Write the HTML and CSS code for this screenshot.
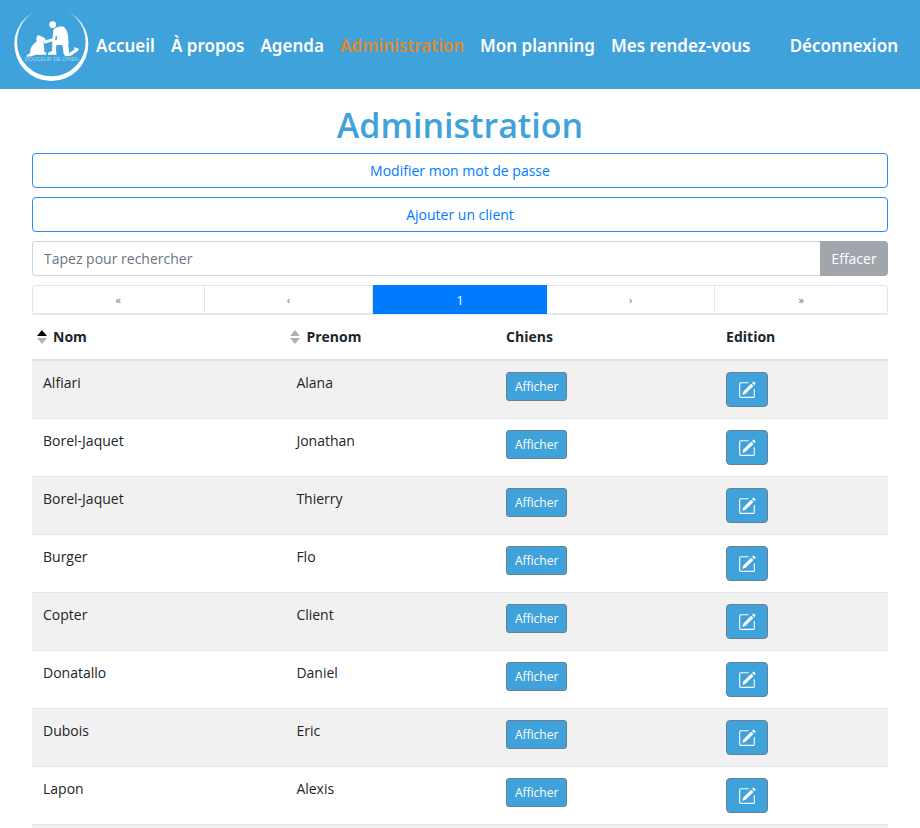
FILE: index.html
```
<!DOCTYPE html>
<html lang="fr">
<head>
<meta charset="utf-8">
<meta name="viewport" content="width=device-width, initial-scale=1">
<title>Administration</title>
<link rel="stylesheet" href="styles.css">
</head>
<body>
<svg class="sprite" aria-hidden="true">
  <symbol id="edit" viewBox="0 0 16 16">
    <path fill="currentColor" d="M15.502 1.94a.5.5 0 0 1 0 .706L14.459 3.69l-2-2L13.502.646a.5.5 0 0 1 .707 0l1.293 1.293zm-1.75 2.456-2-2L4.939 9.21a.5.5 0 0 0-.121.196l-.805 2.414a.25.25 0 0 0 .316.316l2.414-.805a.5.5 0 0 0 .196-.12l6.813-6.814z"/>
    <path fill="currentColor" fill-rule="evenodd" d="M1 13.5A1.5 1.5 0 0 0 2.5 15h11a1.5 1.5 0 0 0 1.5-1.5v-6a.5.5 0 0 0-1 0v6a.5.5 0 0 1-.5.5h-11a.5.5 0 0 1-.5-.5v-11a.5.5 0 0 1 .5-.5H9a.5.5 0 0 0 0-1H2.5A1.5 1.5 0 0 0 1 2.5v11z"/>
  </symbol>
</svg>
<header class="navbar">
  <a class="brand" href="#" aria-label="Douceur de chien">
    <svg class="logo" viewBox="0 0 252 240">
      <defs>
        <linearGradient id="fade" x1="0" y1="0" x2="0" y2="1">
          <stop offset="0.06" stop-color="#fff" stop-opacity="0"/>
          <stop offset="0.2" stop-color="#fff" stop-opacity="0.7"/>
          <stop offset="0.4" stop-color="#fff"/>
        </linearGradient>
      </defs>
      <path fill="url(#fade)" fill-rule="evenodd" d="M124 6a111 111 0 1 0 0 222a111 111 0 1 0 0-222zM124 8a103 103 0 1 1 0 206a103 103 0 1 1 0-206z"/>
      <ellipse class="ink" cx="128" cy="59" rx="10" ry="10"/>
      <path class="ink" d="M130 74Q148 61 161 65Q171 72 174 92L176 118L162 122L140 116Q139 104 142 94L130 92z"/>
      <path class="limb" stroke-width="9" d="M136 76L131 104L104 111"/>
      <path class="limb" stroke-width="15" d="M165 112L136 113"/>
      <path class="limb" stroke-width="12" d="M133 113L132 141"/>
      <path class="ink" d="M126 137h13v12h-25v-5z"/>
      <path class="limb" stroke-width="17" d="M165 112L169 144"/>
      <path class="limb" stroke-width="9" d="M170 149L181 148L198 136"/>
      <path class="ink" d="M191 126l15 5v5l-9 6z"/>
      <path class="ink" d="M79 99L83 91L91 92L98 96L106 101L106 107L98 110L102 120L103 140L110 145L108 149H78C68 152 60 155 51 155L50 151L61 144C59 129 69 116 80 110z"/>
      <text class="logo-text" x="125" y="168" text-anchor="middle">DOUCEUR DE CHIEN</text>
    </svg>
  </a>
  <nav class="links">
    <a href="#">Accueil</a>
    <a href="#">À propos</a>
    <a href="#">Agenda</a>
    <a href="#" class="active" aria-current="page">Administration</a>
    <a href="#">Mon planning</a>
    <a href="#">Mes rendez-vous</a>
  </nav>
  <a class="logout" href="#">Déconnexion</a>
</header>
<main class="content">
  <h1>Administration</h1>
  <button type="button" class="btn-outline">Modifier mon mot de passe</button>
  <button type="button" class="btn-outline">Ajouter un client</button>
  <div class="search">
    <input type="search" aria-label="Rechercher" placeholder="Tapez pour rechercher">
    <button type="button" disabled>Effacer</button>
  </div>
  <div class="pagination" role="group" aria-label="Pagination">
    <button type="button" disabled>«</button>
    <button type="button" disabled>‹</button>
    <button type="button" class="current" aria-current="page">1</button>
    <button type="button" disabled>›</button>
    <button type="button" disabled>»</button>
  </div>
  <table class="clients">
    <colgroup><col class="col-nom"><col class="col-prenom"><col class="col-chiens"><col></colgroup>
    <thead>
      <tr>
        <th class="sortable" aria-sort="ascending"><svg class="sort" viewBox="0 0 10 14"><path class="on" d="M5 0L10 6H0z"/><path class="off" d="M0 8H10L5 14z"/></svg>Nom</th>
        <th class="sortable"><svg class="sort" viewBox="0 0 10 14"><path class="off" d="M5 0L10 6H0z"/><path class="off" d="M0 8H10L5 14z"/></svg>Prenom</th>
        <th>Chiens</th>
        <th>Edition</th>
      </tr>
    </thead>
    <tbody>
      <tr><td>Alfiari</td><td>Alana</td><td><button type="button" class="btn-show">Afficher</button></td><td><button type="button" class="btn-edit" aria-label="Modifier"><svg><use href="#edit"/></svg></button></td></tr>
      <tr><td>Borel-Jaquet</td><td>Jonathan</td><td><button type="button" class="btn-show">Afficher</button></td><td><button type="button" class="btn-edit" aria-label="Modifier"><svg><use href="#edit"/></svg></button></td></tr>
      <tr><td>Borel-Jaquet</td><td>Thierry</td><td><button type="button" class="btn-show">Afficher</button></td><td><button type="button" class="btn-edit" aria-label="Modifier"><svg><use href="#edit"/></svg></button></td></tr>
      <tr><td>Burger</td><td>Flo</td><td><button type="button" class="btn-show">Afficher</button></td><td><button type="button" class="btn-edit" aria-label="Modifier"><svg><use href="#edit"/></svg></button></td></tr>
      <tr><td>Copter</td><td>Client</td><td><button type="button" class="btn-show">Afficher</button></td><td><button type="button" class="btn-edit" aria-label="Modifier"><svg><use href="#edit"/></svg></button></td></tr>
      <tr><td>Donatallo</td><td>Daniel</td><td><button type="button" class="btn-show">Afficher</button></td><td><button type="button" class="btn-edit" aria-label="Modifier"><svg><use href="#edit"/></svg></button></td></tr>
      <tr><td>Dubois</td><td>Eric</td><td><button type="button" class="btn-show">Afficher</button></td><td><button type="button" class="btn-edit" aria-label="Modifier"><svg><use href="#edit"/></svg></button></td></tr>
      <tr><td>Lapon</td><td>Alexis</td><td><button type="button" class="btn-show">Afficher</button></td><td><button type="button" class="btn-edit" aria-label="Modifier"><svg><use href="#edit"/></svg></button></td></tr>
      <tr class="tail"><td colspan="4"></td></tr>
    </tbody>
  </table>
</main>
</body>
</html>
```
FILE: styles.css
```
* {
  box-sizing: border-box;
}

body {
  margin: 0;
  background: #fff;
  color: #212529;
  font: 14px/22px "Open Sans", "Noto Sans", sans-serif;
}

button,
input {
  margin: 0;
  font: inherit;
}

.sprite {
  display: none;
}

.navbar {
  display: flex;
  align-items: center;
  padding: 5px 15px 4px 10px;
  background: #3fa2da;
  font-family: "Noto Sans", "Open Sans", sans-serif;
  font-size: 17px;
  font-weight: 600;
  line-height: 28px;
}

.navbar a {
  color: #fff;
  text-decoration: none;
  white-space: nowrap;
}

.logo {
  display: block;
  width: 84px;
  height: 80px;
}

.ink {
  fill: #fff;
}

.limb {
  fill: none;
  stroke: #fff;
  stroke-linecap: round;
  stroke-linejoin: round;
}

.logo-text {
  fill: #a9d5ef;
  font: 16px "Liberation Sans", sans-serif;
}

.links {
  display: flex;
  flex: 1;
  gap: 16px;
  padding: 2px 0 0 2px;
}

.navbar .active {
  color: #e08a2c;
}

.logout {
  padding: 2px 7px 0;
}

.content {
  padding: 14px 32px 0;
}

h1 {
  margin: 0 0 6px;
  color: #3fa2da;
  font-size: 34px;
  font-weight: 600;
  line-height: 44px;
  text-align: center;
}

.btn-outline {
  display: block;
  width: 100%;
  height: 35px;
  margin-bottom: 9px;
  padding: 0;
  border: 1px solid #2a8bf2;
  border-radius: 4px;
  background: #fff;
  color: #007bff;
}

.search {
  display: flex;
  height: 35px;
  margin-bottom: 9px;
}

.search input {
  flex: 1;
  min-width: 0;
  padding: 0 11px;
  border: 1px solid #ced4da;
  border-right: 0;
  border-radius: 4px 0 0 4px;
  background: #fff;
  appearance: none;
}

.search input::placeholder {
  color: #6c757d;
  opacity: 1;
}

.search button {
  width: 68px;
  padding: 0;
  border: 0;
  border-radius: 0 4px 4px 0;
  background: #a0a6ac;
  color: #fff;
}

.pagination {
  display: grid;
  grid-template-columns: 172fr 169fr 174fr 169fr 172fr;
  height: 29px;
  border: 1px solid #e4e7ea;
  border-radius: 3px;
}

.pagination button {
  padding: 0;
  border: 0;
  border-right: 1px solid #e4e7ea;
  background: transparent;
  color: #6c757d;
  font-size: 11px;
}

.pagination button:last-child {
  border-right: 0;
}

.pagination .current {
  margin: -1px 0;
  border-right: 0;
  background: #007bff;
  color: #fff;
  font-size: 13px;
}

.clients {
  width: 100%;
  border-spacing: 0;
  table-layout: fixed;
}

.col-nom {
  width: 29.6%;
}

.col-prenom {
  width: 24.5%;
}

.col-chiens {
  width: 25.7%;
}

th,
td {
  padding: 11px;
  border-top: 1px solid #e2e6ea;
  text-align: left;
  vertical-align: top;
}

th {
  border-bottom: 2px solid #dee2e6;
  font-weight: 700;
}

.sortable {
  padding-left: 5px;
}

.sort {
  width: 10px;
  height: 14px;
  margin-right: 6px;
  vertical-align: -2px;
}

.sort .on {
  fill: #000;
}

.sort .off {
  fill: #b2b2b2;
}

tbody tr:first-child td {
  border-top: 0;
}

tbody tr:nth-child(odd) {
  background: #f1f1f1;
}

.tail td {
  height: 4px;
  padding: 0;
}

.btn-show,
.btn-edit {
  display: block;
  padding: 0;
  border: 1px solid #6c7f8e;
  background: #3fa2da;
  color: #fff;
}

.btn-show {
  width: 61px;
  height: 29px;
  border-radius: 3px;
  font-size: 12px;
}

.btn-edit {
  width: 42px;
  height: 35px;
  border-radius: 4px;
}

.btn-edit svg {
  display: block;
  width: 18px;
  height: 18px;
  margin: 0 auto;
}
```
